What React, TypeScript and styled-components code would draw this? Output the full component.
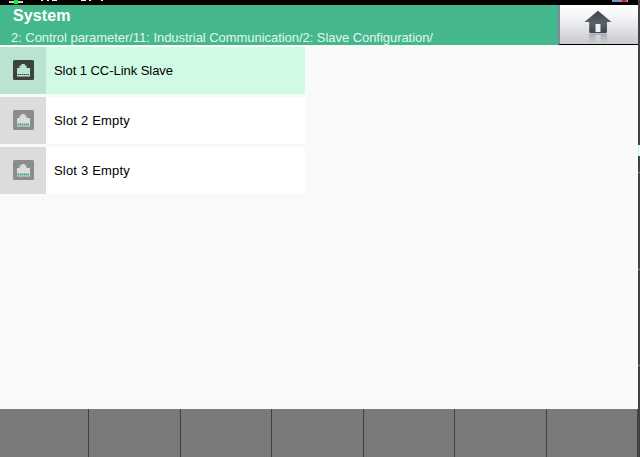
import React from "react";
import styled, { createGlobalStyle } from "styled-components";

const GlobalStyle = createGlobalStyle`
  * { box-sizing: border-box; }
  body {
    margin: 0;
    background: #f9f9f9;
    font-family: "Liberation Sans", Arial, sans-serif;
    overflow: hidden;
  }
`;

const Screen = styled.div`
  display: grid;
  grid-template-columns: 638px 2px;
  width: 640px;
  height: 457px;
  overflow: hidden;
`;

const Panel = styled.div`
  display: flex;
  flex-direction: column;
  min-width: 0;
  background: #f9f9f9;
`;

const StatusStrip = styled.div`
  height: 5px;
  flex: none;
  background: #000;
  svg { display: block; }
`;

const Header = styled.header`
  display: flex;
  flex: none;
  height: 40px;
  background: #44b88c;
`;

const Titles = styled.div`
  flex: 1;
  min-width: 0;
  padding-left: 11px;
  white-space: nowrap;
`;

const Title = styled.h1`
  margin: 0;
  padding: 1px 0 0 2px;
  font-size: 16px;
  line-height: 20px;
  font-weight: bold;
  letter-spacing: 0.1px;
  color: #fff;
`;

const Breadcrumb = styled.div`
  margin-top: 4px;
  font-size: 13px;
  line-height: 16px;
  letter-spacing: -0.047px;
  color: #e2f6ee;
`;

const HomeButton = styled.button`
  display: flex;
  justify-content: center;
  width: 80px;
  height: 40px;
  padding: 0;
  border: 0;
  border-left: 2px solid #7e8c98;
  border-bottom: 1px solid #000;
  background: linear-gradient(#fff 0%, #f2f3f5 35%, #c8cad0 100%);
`;

const SlotList = styled.main`
  display: flex;
  flex-direction: column;
  flex: 1;
  gap: 3px;
  padding-top: 2px;
`;

const SlotRow = styled.div<{ $active: boolean }>`
  display: flex;
  width: 305px;
  height: 47px;
  background: ${(p) => (p.$active ? "#d0fae4" : "#fff")};
`;

const SlotIcon = styled.div<{ $active: boolean }>`
  width: 46px;
  padding: 13px 0 0 13px;
  background: ${(p) => (p.$active ? "#bbe4d0" : "#dcdcdc")};
  svg { display: block; }
`;

const SlotLabel = styled.div<{ $tracking: number }>`
  padding-left: 8px;
  font-size: 13px;
  line-height: 47px;
  letter-spacing: ${(p) => p.$tracking}px;
  color: #000;
`;

const SoftKeys = styled.footer`
  display: grid;
  grid-template-columns: 89px 92px 91px 92px 91px 92px 91px;
  flex: none;
  height: 48px;
`;

const SoftKey = styled.div`
  background: #7a7a7a;
  border-right: 1px solid #404040;
`;

const Edge = styled.div`
  display: flex;
  flex-direction: column;
  background: #404244;
`;

const EdgeMark = styled.div<{ $gap: number; $tall?: boolean }>`
  flex: none;
  margin-top: ${(p) => p.$gap}px;
  height: ${(p) => (p.$tall ? 11 : 1)}px;
  background: ${(p) => (p.$tall ? "linear-gradient(90deg, #a8fcff 50%, #fffff0 50%)" : "#8c8c8c")};
`;

const StatusMarks = () => (
  <svg width="638" height="5" shapeRendering="crispEdges">
    <path d="M9 1h14v2H9z" fill="#d8cbd8" />
    <path d="M14 0h4v4h-4z" fill="#00f52b" />
    <path d="M41 0h2v1h-2zM47 0h2v1h-2zM52 0h5v1h-5zM81 0h5v1h-5zM89 0h2v1h-2zM101 0h2v1h-2z" fill="#fff" />
    <path d="M612 0h8v2h-8z" fill="#8290c4" />
    <path d="M620 0h8v2h-8z" fill="#9a9ed0" />
    <path d="M621 0h6v1h-1v1h-4v-1h-1z" fill="#ed1446" />
  </svg>
);

const HomeIcon = () => (
  <svg width="28" height="39" viewBox="0 0 28 39">
    <defs>
      <linearGradient id="house" x1="0" y1="0" x2="0" y2="1">
        <stop offset="0" stopColor="#3c414b" />
        <stop offset="0.55" stopColor="#5b616b" />
        <stop offset="1" stopColor="#3f454e" />
      </linearGradient>
      <linearGradient id="reflection" x1="0" y1="0" x2="0" y2="1">
        <stop offset="0" stopColor="#878c96" stopOpacity="0.65" />
        <stop offset="1" stopColor="#a5a9b1" stopOpacity="0.1" />
      </linearGradient>
    </defs>
    <path
      d="M13 5.8L26.5 17H22V26.5Q22 28 20.5 28H5.5Q4.2 28 4.2 26.5V17H-0.5Z"
      fill="url(#house)"
    />
    <path d="M10.5 19h5v8h-5z" fill="#f0f1f3" />
    <path d="M4.2 28.5H22V38H15.5V30H10.5V38H4.2Z" fill="url(#reflection)" />
  </svg>
);

const PortIcon = ({ active }: { active: boolean }) => {
  const plate = active ? "#3d4240" : "#8c8c8c";
  const socket = active ? "#bbe4d0" : "#dcdcdc";
  return (
    <svg width="21" height="20" viewBox="0 0 21 20">
      <rect width="21" height="20" rx="1.5" fill={plate} />
      <path d="M4 16.5V8.3Q4 8 4.3 8H6.5V5.5H8.5V4H11.8V5.5H13.5V8H16.7Q17 8 17 8.3V16.5Z" fill={socket} />
      <path
        d="M4.5 14.5H16.5"
        stroke={active ? "#3d4240" : "#35a57b"}
        strokeWidth={active ? 1.2 : 2}
        strokeDasharray="1.5 0.5"
      />
    </svg>
  );
};

const slots = [
  { label: "Slot 1 CC-Link Slave", active: true, tracking: -0.05 },
  { label: "Slot 2 Empty", active: false, tracking: 0.19 },
  { label: "Slot 3 Empty", active: false, tracking: 0.19 },
];

export default function App() {
  return (
    <>
      <GlobalStyle />
      <Screen>
        <Panel>
          <StatusStrip><StatusMarks /></StatusStrip>
          <Header>
            <Titles>
              <Title>System</Title>
              <Breadcrumb>2: Control parameter/11: Industrial Communication/2: Slave Configuration/</Breadcrumb>
            </Titles>
            <HomeButton aria-label="Home"><HomeIcon /></HomeButton>
          </Header>
          <SlotList>
            {slots.map((slot) => (
              <SlotRow key={slot.label} $active={slot.active}>
                <SlotIcon $active={slot.active}><PortIcon active={slot.active} /></SlotIcon>
                <SlotLabel $tracking={slot.tracking}>{slot.label}</SlotLabel>
              </SlotRow>
            ))}
          </SlotList>
          <SoftKeys>
            {Array.from({ length: 7 }, (_, i) => <SoftKey key={i} />)}
          </SoftKeys>
        </Panel>
        <Edge>
          <EdgeMark $gap={145} $tall />
          <EdgeMark $gap={16} />
          <EdgeMark $gap={96} />
          <EdgeMark $gap={95} />
        </Edge>
      </Screen>
    </>
  );
}
